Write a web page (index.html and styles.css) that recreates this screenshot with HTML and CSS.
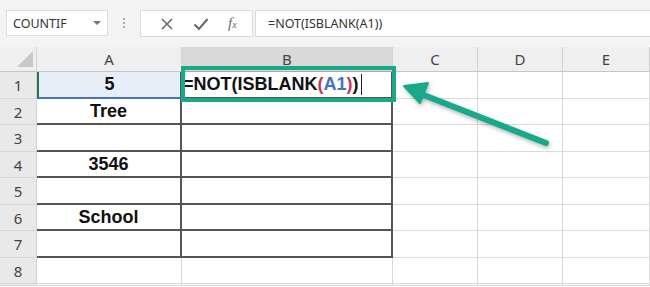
FILE: index.html
```html
<!DOCTYPE html>
<html lang="en">
<head>
    <meta charset="UTF-8">
    <title>ISBLANK</title>
    <link rel="stylesheet" href="styles.css">
</head>
<body>
    <div class="toolbar">
        <div class="namebox">
            <span>COUNTIF</span>
            <span class="drop"></span>
        </div>
        <div class="grip"><i></i><i></i><i></i></div>
        <div class="buttons">
            <svg width="14" height="14" viewBox="0 0 14 14"><path d="M2 2 L12 12 M12 2 L2 12" stroke="#6b6b6b" stroke-width="1.6" fill="none"/></svg>
            <svg width="16" height="14" viewBox="0 0 16 14"><path d="M1.5 7.5 L6 12 L14.5 2" stroke="#6b6b6b" stroke-width="2.2" fill="none"/></svg>
            <span class="fx">f<sub>x</sub></span>
        </div>
        <div class="formula">=NOT(ISBLANK(A1))</div>
    </div>

    <div class="sheet">
        <div class="hd corner"><span class="tri"></span></div>
        <div class="hd">A</div>
        <div class="hd sel">B</div>
        <div class="hd">C</div>
        <div class="hd">D</div>
        <div class="hd">E</div>

        <div class="rh">1</div>
        <div class="c b active">5</div>
        <div class="c b edit">=NOT(ISBLANK<span class="p">(</span><span class="ref">A1</span><span class="p">)</span>)<span class="caret"></span></div>
        <div class="c"></div><div class="c"></div><div class="c"></div>

        <div class="rh">2</div>
        <div class="c b">Tree</div><div class="c b"></div>
        <div class="c"></div><div class="c"></div><div class="c"></div>

        <div class="rh">3</div>
        <div class="c b"></div><div class="c b"></div>
        <div class="c"></div><div class="c"></div><div class="c"></div>

        <div class="rh">4</div>
        <div class="c b">3546</div><div class="c b"></div>
        <div class="c"></div><div class="c"></div><div class="c"></div>

        <div class="rh">5</div>
        <div class="c b"></div><div class="c b"></div>
        <div class="c"></div><div class="c"></div><div class="c"></div>

        <div class="rh">6</div>
        <div class="c b">School</div><div class="c b"></div>
        <div class="c"></div><div class="c"></div><div class="c"></div>

        <div class="rh">7</div>
        <div class="c b"></div><div class="c b"></div>
        <div class="c"></div><div class="c"></div><div class="c"></div>

        <div class="rh">8</div>
        <div class="c"></div><div class="c"></div>
        <div class="c"></div><div class="c"></div><div class="c"></div>

        <div class="rh"></div>
        <div class="c"></div><div class="c"></div>
        <div class="c"></div><div class="c"></div><div class="c"></div>
    </div>

    <!-- callout: box around B1 and the arrow pointing at it -->
    <div class="highlight"></div>
    <svg class="arrow" width="650" height="287" viewBox="0 0 650 287">
        <g fill="#17a98a" stroke="#17a98a" stroke-linecap="round" stroke-linejoin="round">
            <line x1="546" y1="143" x2="416" y2="92" stroke-width="6"/>
            <polygon points="404,86 428,83 420,103" stroke-width="2"/>
        </g>
    </svg>
</body>
</html>
```

FILE: styles.css
```css
body {
    margin: 0;
    width: 650px;
    height: 287px;
    overflow: hidden;
    background: #fff;
    font-family: "Noto Sans", Arial, sans-serif;
    position: relative;
}
.toolbar {
    height: 47px;
    background: #f3f3f3;
    display: flex;
    align-items: flex-start;
    padding-top: 10px;
    box-sizing: border-box;
}
.namebox {
    margin-left: 6px;
    width: 102px;
    height: 26px;
    background: #fff;
    border: 1px solid #dcdcdc;
    box-sizing: border-box;
    display: flex;
    align-items: center;
    justify-content: space-between;
    padding: 0 6px 0 6px;
    font-size: 12.5px;
    color: #333;
}
.drop {
    width: 0;
    height: 0;
    border-left: 4px solid transparent;
    border-right: 4px solid transparent;
    border-top: 4px solid #777;
}
.grip {
    width: 32px;
    height: 26px;
    display: flex;
    flex-direction: column;
    align-items: center;
    justify-content: center;
    gap: 2px;
}
.grip i {
    width: 2px;
    height: 2px;
    background: #aaa;
}
.buttons {
    width: 113px;
    height: 27px;
    background: #fff;
    border: 1px solid #dcdcdc;
    box-sizing: border-box;
    display: flex;
    align-items: center;
    justify-content: space-around;
    padding: 0 6px 0 10px;
}
.fx {
    font-family: "Liberation Serif", serif;
    font-style: italic;
    font-size: 15px;
    color: #6b6b6b;
}
.fx sub {
    font-size: 10px;
    vertical-align: baseline;
}
.formula {
    flex: 1;
    margin-left: 2px;
    height: 27px;
    background: #fff;
    border: 1px solid #dcdcdc;
    border-right: none;
    box-sizing: border-box;
    display: flex;
    align-items: center;
    padding-left: 12px;
    font-size: 12.5px;
    color: #333;
}
.sheet {
    display: grid;
    grid-template-columns: 37px 145px 211px 85px 85px 87px;
    grid-template-rows: 25px 27px 26px 27px 26px 27px 26px 27px 26px 2px;
}
.hd, .rh {
    background: #efefef;
    border-right: 1px solid #d2d2d2;
    border-bottom: 1px solid #c6c6c6;
    box-sizing: border-box;
    display: flex;
    align-items: center;
    justify-content: center;
    font-size: 15px;
    color: #444;
}
.hd.sel {
    background: #d9d9d9;
    border-bottom-color: #a9a9a9;
}
.corner {
    justify-content: flex-end;
    align-items: flex-end;
    padding: 0 3px 4px 0;
}
.tri {
    width: 0;
    height: 0;
    border-left: 16px solid transparent;
    border-bottom: 16px solid #c8c8c8;
}
.rh {
    background: #e9e9e9;
    border-bottom-color: #d6d6d6;
}
.c {
    border-right: 1px solid #dadada;
    border-bottom: 1px solid #dadada;
    box-sizing: border-box;
    display: flex;
    align-items: center;
    justify-content: center;
    font-family: "Liberation Sans", Arial, sans-serif;
    font-weight: bold;
    font-size: 18px;
    color: #111;
}
.c.b {
    border-right: 2px solid #555;
    border-bottom: 2px solid #555;
}
.c.active {
    background: #e8eef8;
    border-left: 2px solid #217346;
    border-bottom: 2px solid #4472c4;
}
.c.edit {
    justify-content: flex-start;
    padding-left: 1px;
}
.p {
    color: #c0395a;
}
.ref {
    color: #4472c4;
}
.caret {
    display: inline-block;
    width: 1px;
    height: 21px;
    background: #222;
    margin-left: 2px;
}
.highlight {
    position: absolute;
    left: 181px;
    top: 66px;
    width: 215px;
    height: 36px;
    border: 4px solid #17a98a;
    box-sizing: border-box;
}
.arrow {
    position: absolute;
    left: 0;
    top: 0;
    filter: drop-shadow(1px 2px 2px rgba(0, 0, 0, 0.3));
}
```
